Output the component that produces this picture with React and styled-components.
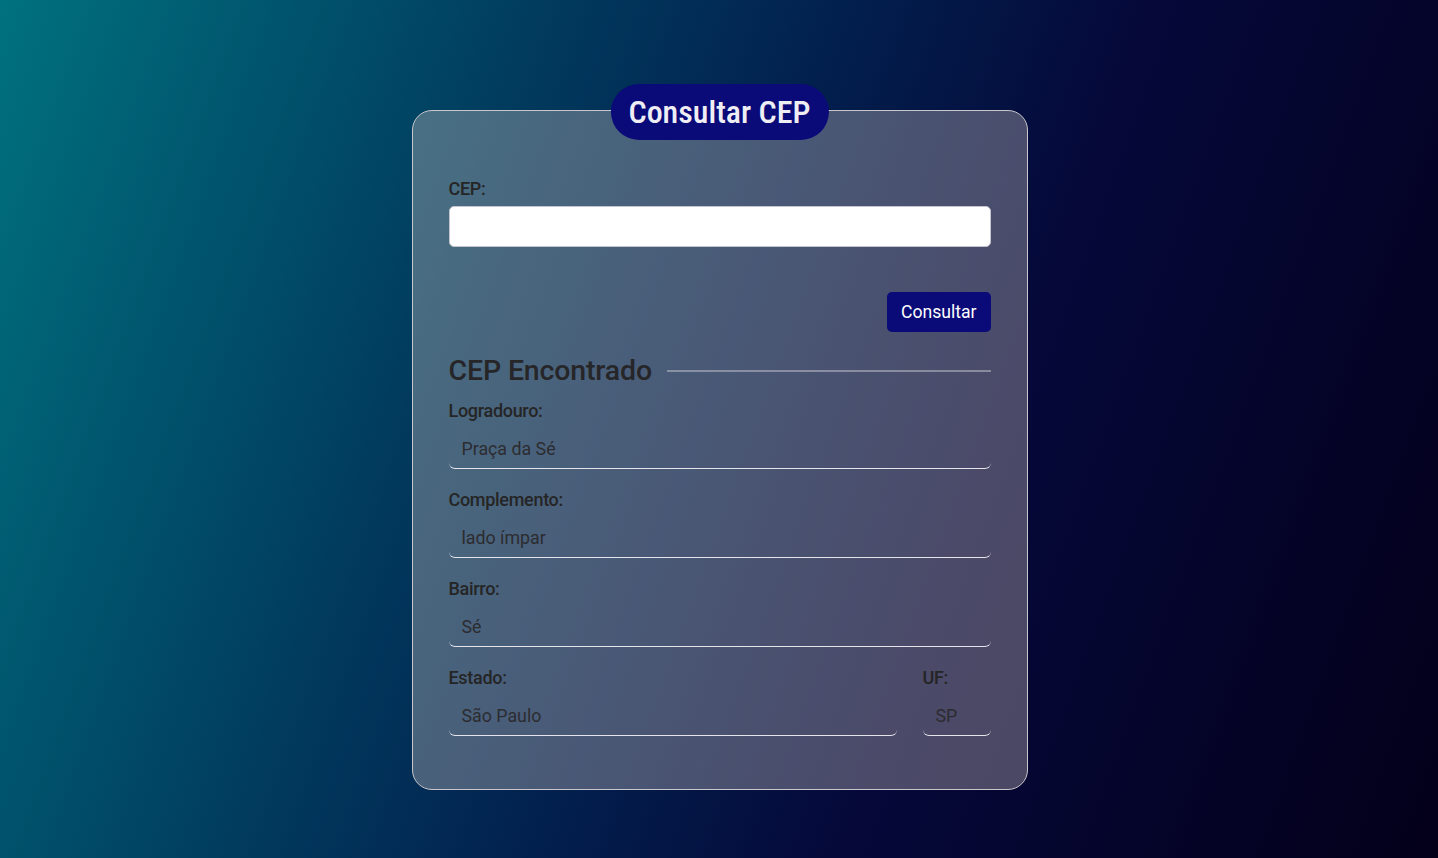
import React from 'react'
import styled, { createGlobalStyle } from 'styled-components'

const GlobalStyle = createGlobalStyle`
  * { box-sizing: border-box; }
  body {
    margin: 0;
    font-family: Roboto, "Noto Sans", sans-serif;
  }
`

const Page = styled.main`
  min-height: 100vh;
  display: flex;
  justify-content: center;
  align-items: flex-start;
  padding: 110px 0 0 1px;
  background: linear-gradient(110deg, #00717f 0%, #013d5f 30%, #02204e 48%, #050839 66%, #04001a 100%);
`

const Card = styled.section`
  position: relative;
  width: 616px;
  padding: 67px 36px 53px;
  border: 1px solid #c9c6cc;
  border-radius: 20px;
  background: rgba(200, 190, 190, 0.36);
`

const Title = styled.h1`
  position: absolute;
  top: -27px;
  left: 50%;
  transform: translateX(-50%);
  margin: 0;
  height: 56px;
  padding: 0 18px;
  display: flex;
  align-items: center;
  border-radius: 28px;
  background: #0a0a78;
  color: #eeeef4;
  font-size: 32px;
  font-weight: 500;
  font-stretch: 75%;
  white-space: nowrap;
`

const Label = styled.label`
  display: block;
  font-size: 18px;
  line-height: 21px;
  font-weight: 500;
  letter-spacing: -0.3px;
  color: #252525;
  margin-bottom: 7px;
`

const CepInput = styled.input`
  display: block;
  width: 100%;
  height: 41px;
  border: 1px solid #c4c4cc;
  border-radius: 5px;
  background: #fff;
  font: inherit;
  font-size: 18px;
  padding: 0 12px;
  outline: none;
`

const Actions = styled.div`
  display: flex;
  justify-content: flex-end;
  margin-top: 45px;
`

const Button = styled.button`
  height: 40px;
  padding: 0 14px;
  border: none;
  border-radius: 5px;
  background: #0a0a78;
  color: #fff;
  font-family: Roboto, sans-serif;
  font-size: 17.6px;
  cursor: pointer;
`

const Heading = styled.div`
  display: flex;
  align-items: center;
  gap: 15px;
  margin-top: 23px;
  margin-bottom: 13px;

  h2 {
    margin: 0;
    font-size: 28.5px;
    line-height: 32px;
    font-weight: 500;
    letter-spacing: -0.15px;
    color: #262629;
    white-space: nowrap;
  }

  span {
    flex: 1;
    height: 2px;
    background: rgba(190, 190, 200, 0.55);
  }
`

const Stack = styled.div`
  display: flex;
  flex-direction: column;
  gap: 20px;
`

const Row = styled.div`
  display: flex;
  gap: 26px;
`

const Group = styled.div`
  flex: ${p => (p.$narrow ? '0 0 68px' : '1')};
`

const Value = styled.input`
  display: block;
  width: 100%;
  height: 41px;
  padding: 0 13px;
  border: none;
  border-bottom: 1px solid #e4e4ea;
  border-radius: 6px;
  background: transparent;
  font-family: Roboto, sans-serif;
  font-size: 17.8px;
  color: #2c2c30;
  outline: none;
`

const Field = ({ label, value, narrow }) => (
  <Group $narrow={narrow}>
    <Label>{label}</Label>
    <Value readOnly value={value} />
  </Group>
)

export default function App() {
  return (
    <>
      <GlobalStyle />
      <Page>
        <Card>
          <Title>Consultar CEP</Title>
          <Label htmlFor="cep">CEP:</Label>
          <CepInput id="cep" type="text" />
          <Actions>
            <Button>Consultar</Button>
          </Actions>
          <Heading>
            <h2>CEP Encontrado</h2>
            <span />
          </Heading>
          <Stack>
            <Field label="Logradouro:" value="Praça da Sé" />
            <Field label="Complemento:" value="lado ímpar" />
            <Field label="Bairro:" value="Sé" />
            <Row>
              <Field label="Estado:" value="São Paulo" />
              <Field label="UF:" value="SP" narrow />
            </Row>
          </Stack>
        </Card>
      </Page>
    </>
  )
}
